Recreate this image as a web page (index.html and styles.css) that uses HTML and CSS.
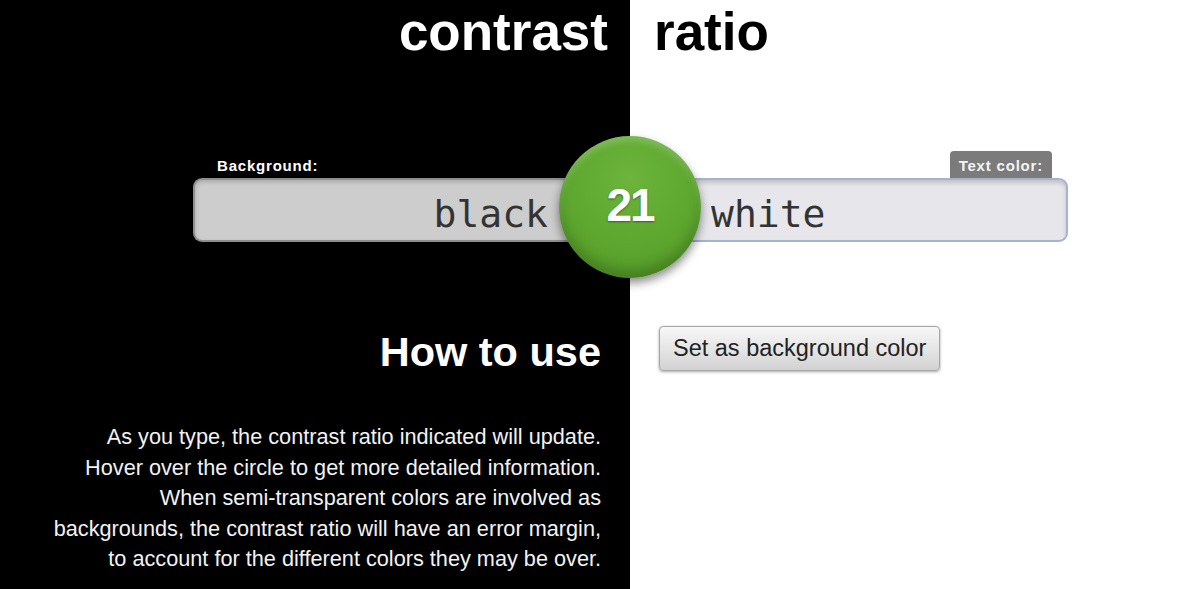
FILE: index.html
```html
<!DOCTYPE html>
<html lang="en">
<head>
<meta charset="utf-8">
<title>Contrast Ratio</title>
<link rel="stylesheet" href="styles.css">
</head>
<body>
<main class="page">
  <h1 class="title title-left">contrast</h1>
  <h1 class="title title-right">ratio</h1>

  <div class="field field-left">
    <label class="tab tab-dark" for="bg">Background:</label>
    <input id="bg" class="color-input input-left" type="text" value="black">
  </div>
  <div class="field field-right">
    <label class="tab tab-gray" for="fg">Text color:</label>
    <input id="fg" class="color-input input-right" type="text" value="white">
  </div>

  <section class="howto">
    <h2 class="howto-title">How to use</h2>
    <p class="howto-text">As you type, the contrast ratio indicated will update.<br>Hover over the circle to get more detailed information.<br>When semi-transparent colors are involved as backgrounds, the contrast ratio will have an error margin, to account for the different colors they may be over.</p>
  </section>
  <div class="actions">
    <button class="swap-btn" type="button">Set as background color</button>
  </div>

  <output class="ratio">21</output>
</main>
</body>
</html>
```

FILE: styles.css
```css
html, body {
  margin: 0;
  padding: 0;
}

body {
  width: 1180px;
  height: 589px;
  overflow: hidden;
  background: linear-gradient(to right, #000 0, #000 630px, #fff 630px, #fff 100%);
  font-family: "Liberation Sans", Arial, Helvetica, sans-serif;
}

.page {
  position: relative;
  display: grid;
  grid-template-columns: 630px 550px;
  grid-template-rows: auto auto auto;
}

.title {
  margin: 0;
  padding-top: 2px;
  font-size: 53px;
  line-height: 60px;
  font-weight: bold;
}

.title-left {
  color: #fff;
  text-align: right;
  padding-right: 22px;
}

.title-right {
  color: #000;
  padding-left: 24px;
}

.field {
  margin-top: 89px;
  display: flex;
  flex-direction: column;
}

.field-left {
  padding-left: 193px;
  align-items: flex-start;
}

.field-right {
  padding-right: 112px;
  align-items: flex-end;
}

.tab {
  display: block;
  height: 27px;
  line-height: 29px;
  padding: 0 9px;
  margin: 0 16px 0 15px;
  font-size: 15px;
  font-weight: bold;
  letter-spacing: 0.8px;
  color: #fff;
  border-radius: 4px 4px 0 0;
}

.tab-dark {
  background: #000;
}

.tab-gray {
  background: #7b7b7b;
  color: #f4f4f4;
}

.color-input {
  box-sizing: border-box;
  width: 100%;
  height: 64px;
  margin: 0;
  padding: 8px 0 0;
  font-family: "DejaVu Sans Mono", monospace;
  font-size: 38px;
  color: #333;
  outline: none;
}

.input-left {
  text-align: right;
  padding-right: 82px;
  background: #cdcdcd;
  border: 2px solid #8e8e8e;
  border-right: 0;
  border-radius: 9px 0 0 9px;
  box-shadow: inset 0 2px 4px rgba(0, 0, 0, 0.18);
}

.input-right {
  text-align: left;
  padding-left: 81px;
  background: #e6e6eb;
  border: 2px solid #a3b3d1;
  border-left: 0;
  border-radius: 0 9px 9px 0;
  box-shadow: inset 0 3px 4px rgba(0, 0, 0, 0.16);
}

.howto {
  margin-top: 84px;
  padding: 0 29px 0 45px;
  text-align: right;
  color: #fff;
}

.howto-title {
  margin: 0;
  padding-top: 2px;
  font-size: 41.5px;
  line-height: 48px;
  font-weight: bold;
}

.howto-text {
  margin: 46px 0 0;
  font-size: 21.7px;
  line-height: 30.5px;
  color: #f2f2f2;
}

.actions {
  margin-top: 84px;
  padding-left: 29px;
}

.swap-btn {
  height: 45px;
  padding: 0 13px;
  font-family: "Liberation Sans", Arial, sans-serif;
  font-size: 23.5px;
  color: #222;
  background: linear-gradient(#f7f7f7, #e4e4e4 55%, #d2d2d2);
  border: 1px solid #a5a5a5;
  border-radius: 4px;
  box-shadow: 0 1px 3px rgba(0, 0, 0, 0.35);
}

.ratio {
  position: absolute;
  left: 559px;
  top: 136px;
  width: 142px;
  height: 142px;
  border-radius: 50%;
  display: flex;
  align-items: center;
  justify-content: center;
  padding-bottom: 4px;
  box-sizing: border-box;
  background: radial-gradient(circle at 50% 30%, #6cb43c 0, #5da72f 55%, #4f9223 100%);
  box-shadow: inset 0 -8px 12px rgba(0, 0, 0, 0.18), inset 0 5px 6px rgba(255, 255, 255, 0.2), 0 5px 10px rgba(0, 0, 0, 0.45);
  color: #fff;
  font-size: 46px;
  font-weight: bold;
  letter-spacing: -2px;
  text-shadow: 0 1px 2px rgba(0, 0, 0, 0.45);
  z-index: 2;
}
```
